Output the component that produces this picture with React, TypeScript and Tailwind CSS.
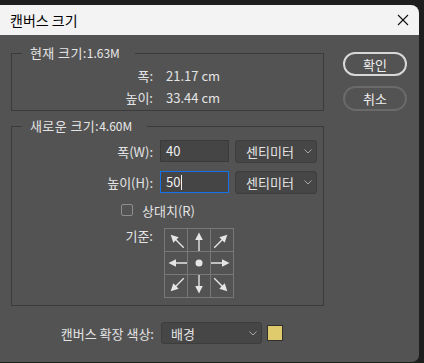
import React from "react";

const Chevron = () => (
  <svg width="8" height="5" viewBox="0 0 8 5" className="shrink-0">
    <polyline points="0.5,0.5 4,4 7.5,0.5" fill="none" stroke="#a8a8a8" strokeWidth="1" />
  </svg>
);

const Arrow = ({ rot }: { rot: number }) => (
  <svg width="22" height="22" viewBox="0 0 22 22">
    <g transform={`rotate(${rot} 11 11)`}>
      <line x1="11" y1="10" x2="11" y2="22" stroke="#e6e6e6" strokeWidth="1.4" />
      <polygon points="11,3.5 7.2,11 14.8,11" fill="#e6e6e6" />
    </g>
  </svg>
);

const Dot = () => (
  <svg width="22" height="22" viewBox="0 0 22 22">
    <circle cx="11" cy="11" r="3.5" fill="#e6e6e6" />
  </svg>
);

function Group({ legend, value, children, className }: { legend: string; value: string; children: React.ReactNode; className?: string }) {
  return (
    <div className={`relative border border-[#3b3b3b] ${className ?? ""}`}>
      <span className="absolute left-[10px] top-[-9px] pl-[8px] pr-[15px] bg-[#535353] text-[13px] leading-[16px] text-[#e4e4e4] whitespace-nowrap tracking-[0.4px]">
        {legend}
        <span className="text-[12px] text-[#e8e8e8] tracking-normal">{value}</span>
      </span>
      {children}
    </div>
  );
}

export default function App() {
  const rots = [-45, 0, 45, -90, null, 90, -135, 180, 135];
  return (
    <div className="w-[424px] h-[363px] bg-[#1e1e1e] overflow-hidden pt-[5px] font-['Noto_Sans_CJK_KR',sans-serif]">
      <div className="w-[419px] h-[357px] flex flex-col rounded-tr-[8px] rounded-br-[7px] overflow-hidden">
        <div className="h-[30px] shrink-0 bg-[#f3f3f3] flex items-center justify-between pl-[10px] pr-[10px]">
          <span className="text-[14px] leading-none text-black">캔버스 크기</span>
          <svg width="12" height="12" viewBox="0 0 12 12">
            <line x1="1" y1="1" x2="11" y2="11" stroke="#111" strokeWidth="1.1" />
            <line x1="11" y1="1" x2="1" y2="11" stroke="#111" strokeWidth="1.1" />
          </svg>
        </div>
        <div className="flex-1 bg-[#535353] flex pl-[11px] pt-[17px] text-[13px] text-[#e4e4e4]">
          <div className="w-[313px] flex flex-col">
            <Group legend="현재 크기:" value="1.63M" className="mt-[1px] pt-[10px] pb-[2px]">
              <div className="flex items-center h-[22px]">
                <span className="w-[141px] text-right leading-none">폭:</span>
                <span className="ml-[13px] leading-none">21.17 cm</span>
              </div>
              <div className="flex items-center h-[22px]">
                <span className="w-[141px] text-right leading-none">높이:</span>
                <span className="ml-[13px] leading-none">33.44 cm</span>
              </div>
            </Group>

            <Group legend="새로운 크기:" value="4.60M" className="mt-[15px] pt-[13px] pb-[7px]">
              <div className="flex items-center h-[22px]">
                <span className="w-[141px] text-right leading-none">폭(W):</span>
                <div className="ml-[7px] w-[69px] h-[22px] bg-[#454545] border border-[#3a3a3a] flex items-center pl-[5px] text-[#f0f0f0]">40</div>
                <div className="ml-[6px] w-[82px] h-[23px] bg-[#464646] border border-[#3d3d3d] rounded-[3px] flex items-center justify-between pl-[10px] pr-[4px]">
                  <span className="leading-none">센티미터</span>
                  <Chevron />
                </div>
              </div>
              <div className="flex items-center h-[22px] mt-[9px]">
                <span className="w-[141px] text-right leading-none">높이(H):</span>
                <div className="ml-[7px] w-[69px] h-[22px] bg-[#454545] border border-[#1473e6] flex items-center pl-[5px] text-[#f0f0f0]">
                  50<span className="inline-block w-px h-[15px] bg-[#f0f0f0] ml-[1px]" />
                </div>
                <div className="ml-[6px] w-[82px] h-[23px] bg-[#464646] border border-[#3d3d3d] rounded-[3px] flex items-center justify-between pl-[10px] pr-[4px]">
                  <span className="leading-none">센티미터</span>
                  <Chevron />
                </div>
              </div>
              <div className="flex items-center h-[18px] mt-[8px] ml-[109px]">
                <span className="w-[12px] h-[12px] border border-[#8e8e8e] rounded-[2px]" />
                <span className="ml-[9px] leading-none">상대치(R)</span>
              </div>
              <div className="flex items-start mt-[9px]">
                <span className="w-[141px] text-right leading-[16px]">기준:</span>
                <div className="ml-[11px] grid grid-cols-3 gap-px p-px bg-[#787878]">
                  {rots.map((r, i) => (
                    <div key={i} className="w-[22px] h-[22px] bg-[#535353]">
                      {r === null ? <Dot /> : <Arrow rot={r} />}
                    </div>
                  ))}
                </div>
              </div>
            </Group>

            <div className="flex items-center mt-[16px]">
              <span className="w-[143px] text-right leading-none">캔버스 확장 색상:</span>
              <div className="ml-[7px] w-[101px] h-[22px] bg-[#464646] border border-[#3d3d3d] rounded-[3px] flex items-center justify-between pl-[9px] pr-[4px]">
                <span className="leading-none">배경</span>
                <Chevron />
              </div>
              <div className="ml-[5px] w-[16px] h-[16px] bg-[#e0cb6c] border border-[#303030]" />
            </div>
          </div>

          <div className="ml-[19px] flex flex-col gap-[10px]">
            <div className="w-[64px] h-[24px] rounded-full border-2 border-[#d8d8d8] flex items-center justify-center text-[#f0f0f0] leading-none">확인</div>
            <div className="w-[64px] h-[25px] rounded-full border-2 border-[#6a6a6a] flex items-center justify-center text-[#f0f0f0] leading-none">취소</div>
          </div>
        </div>
      </div>
    </div>
  );
}
